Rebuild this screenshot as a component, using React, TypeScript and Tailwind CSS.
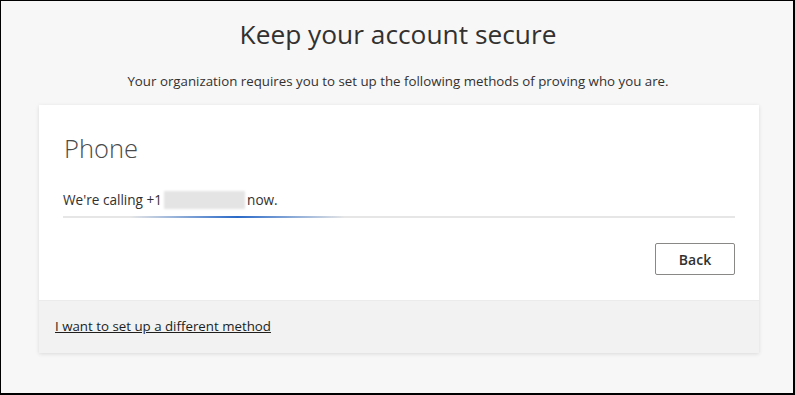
export default function App() {
    return (
        <div
            className="w-[795px] h-[395px] bg-[#f7f7f7] border-l border-t border-r-2 border-b-2 border-black flex flex-col items-center text-[#323130]"
            style={{ fontFamily: '"Segoe UI", "Open Sans", "Noto Sans", sans-serif' }}
        >
            {/* Header */}
            <h1 className="mt-[15px] ml-[2px] text-[26.3px] leading-[36px] font-normal">Keep your account secure</h1>
            <p className="mt-[19px] ml-[2px] text-[13.3px] leading-[20px]">
                Your organization requires you to set up the following methods of proving who you are.
            </p>

            {/* Card */}
            <div className="mt-[14px] self-start ml-[38px] w-[720px] bg-white shadow-[0_1px_4px_rgba(0,0,0,0.12)]">
                <div className="px-6 pt-[23px] pb-[25px]">
                    <h2 className="ml-[1px] text-[25.5px] leading-[40px] font-light text-[#4a4a4a]">Phone</h2>
                    <div className="mt-[22px] flex items-center text-[13.6px] leading-[20px]">
                        <span>We&apos;re calling +1</span>
                        <span className="ml-[2px] mr-[2px] inline-block w-[81px] h-[18px] bg-[#e4e4e4] blur-[1px]" />
                        <span>now.</span>
                    </div>
                    {/* progress */}
                    <div className="mt-[6px] h-[2px] bg-[#e6e6e6] relative overflow-hidden">
                        <div className="absolute left-[67px] top-0 h-[2px] w-[215px] bg-gradient-to-r from-transparent via-[#2a6ac8] to-transparent" />
                    </div>
                    <div className="mt-[25px] flex justify-end">
                        <button className="w-[80px] h-[32px] border border-[#8a8886] rounded-[2px] bg-white text-[14px] font-semibold text-[#323130]">
                            Back
                        </button>
                    </div>
                </div>
                <div className="h-[53px] bg-[#f2f2f2] border-t border-[#ebebeb] flex items-center pl-4">
                    <a href="#" className="text-[13.3px] underline text-[#201f1e]">
                        I want to set up a different method
                    </a>
                </div>
            </div>
        </div>
    );
}
